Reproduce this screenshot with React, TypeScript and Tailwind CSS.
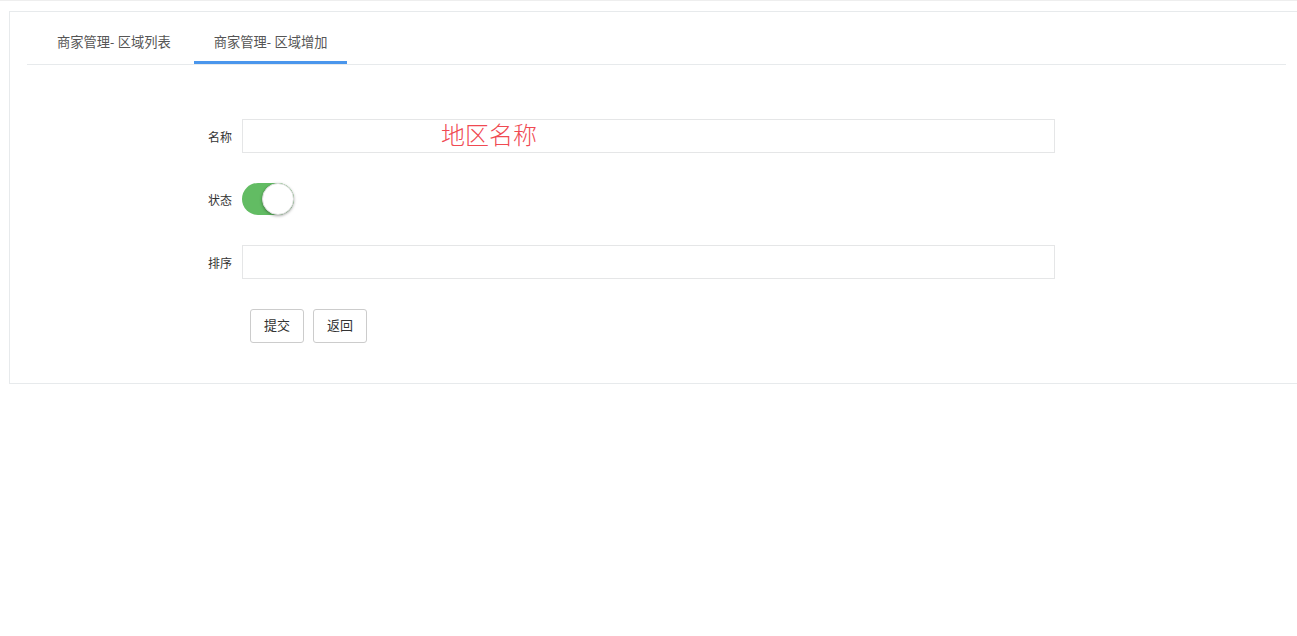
import type { ReactElement } from 'react';

const font = { fontFamily: '"Open Sans", "Noto Sans CJK SC", sans-serif' };

function FormRow({ label, children }: { label: string; children: React.ReactNode }): ReactElement {
  return (
    <div className="flex items-center">
      <label className="w-[215px] pr-[10px] pt-[4px] text-right text-[12px] text-[#333]">{label}</label>
      {children}
    </div>
  );
}

export default function App(): ReactElement {
  return (
    <div className="min-h-[636px] overflow-hidden border-t border-[#eeeeee] bg-white" style={font}>
      <div className="pl-[9px] pt-[10px]">
        <div className="w-[1300px] border border-[#e7eaec] bg-white pl-[17px] pt-[12px] pb-[40px]">
          {/* tabs */}
          <div className="flex w-[1259px] border-b border-[#e7eaec] pl-[10px]">
            <div className="mr-[3px] flex h-[40px] items-center border-b-[3px] border-transparent px-5 text-[13.25px] text-[#555]">
              商家管理- 区域列表
            </div>
            <div className="flex h-[40px] items-center border-b-[3px] border-[#4a96ec] px-5 text-[13.25px] text-[#555]">
              商家管理- 区域增加
            </div>
          </div>

          {/* form */}
          <div className="mt-[54px] flex flex-col gap-[30px]">
            <FormRow label="名称">
              <div className="relative h-[34px] w-[813px] border border-[#e5e6e7]">
                <span
                  className="absolute left-[198px] top-[-2px] text-[24px] leading-[32px] text-[#f04a52]"
                  style={{ fontFamily: '"Noto Sans CJK SC", serif', fontWeight: 300 }}
                >
                  地区名称
                </span>
              </div>
            </FormRow>
            <FormRow label="状态">
              <div className="relative h-[32px] w-[52px] rounded-full bg-[#62bc63]">
                <span className="absolute right-0 top-0 h-[32px] w-[32px] rounded-full border border-[#dfdfdf] bg-white shadow-[0_1px_3px_rgba(0,0,0,0.35)]" />
              </div>
            </FormRow>
            <FormRow label="排序">
              <div className="h-[34px] w-[813px] border border-[#e5e6e7]" />
            </FormRow>
            <div className="flex gap-[9px] pl-[223px]">
              <button className="h-[34px] w-[54px] rounded-[3px] border border-[#cccccc] bg-white text-[13px] text-[#333]">
                提交
              </button>
              <button className="h-[34px] w-[54px] rounded-[3px] border border-[#cccccc] bg-white text-[13px] text-[#333]">
                返回
              </button>
            </div>
          </div>
        </div>
      </div>
    </div>
  );
}
